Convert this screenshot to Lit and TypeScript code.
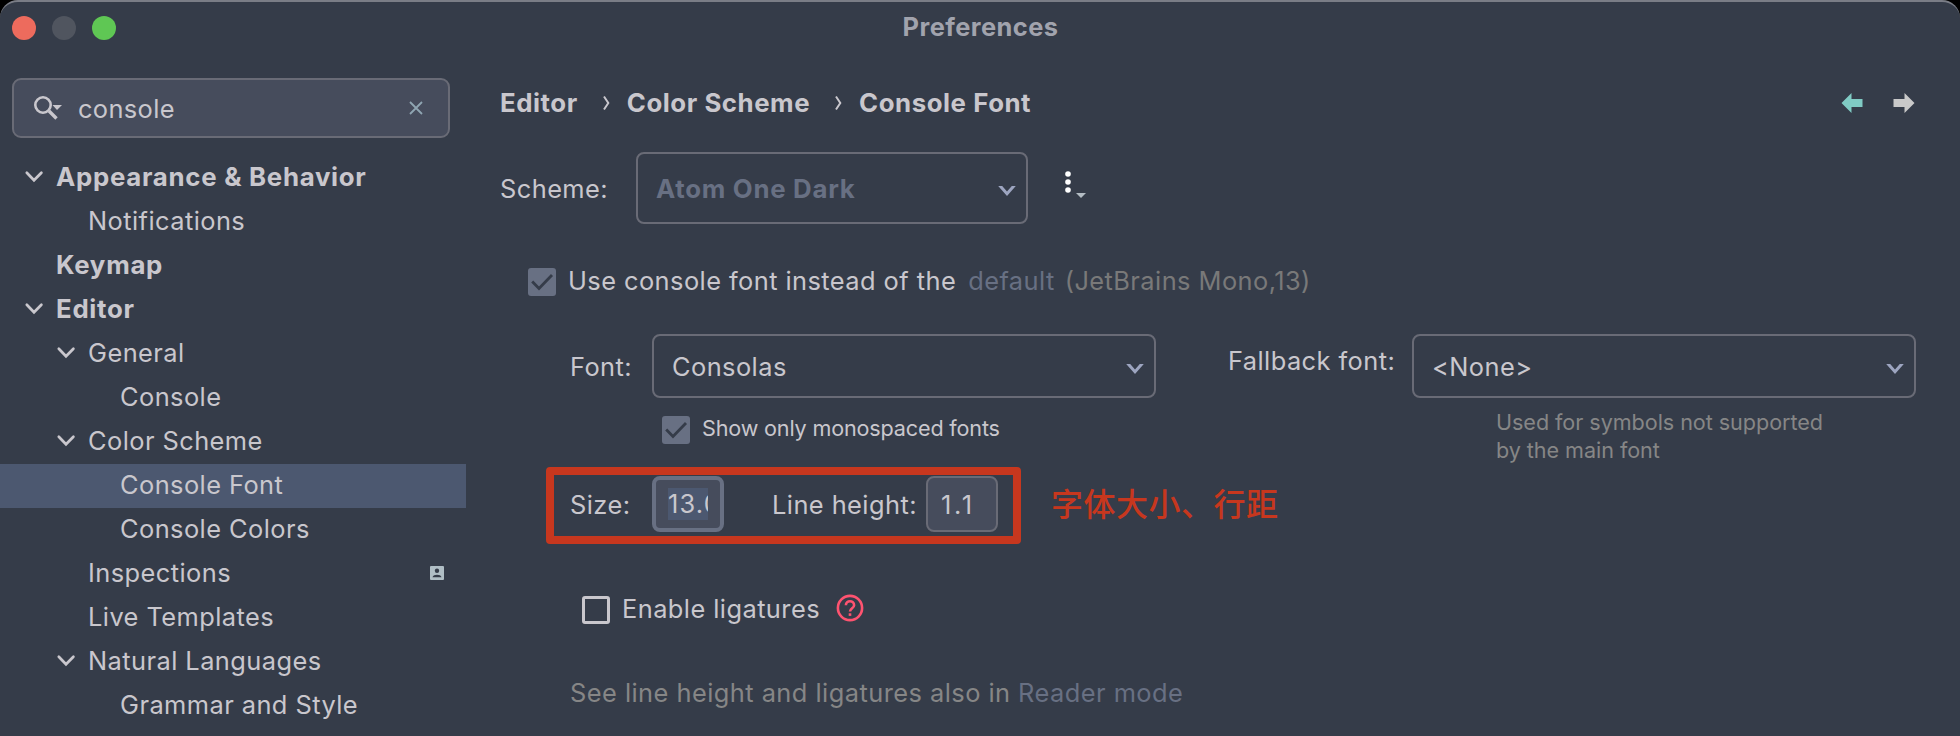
import { LitElement, html, css, svg, nothing } from "lit";
import { customElement, property } from "lit/decorators.js";
import { classMap } from "lit/directives/class-map.js";

interface TreeItem {
  label: string;
  level: number;
  bold?: boolean;
  open?: boolean;
  selected?: boolean;
  badge?: boolean;
}

const TREE: TreeItem[] = [
  { label: "Appearance & Behavior", level: 0, bold: true, open: true },
  { label: "Notifications", level: 1 },
  { label: "Keymap", level: 0, bold: true },
  { label: "Editor", level: 0, bold: true, open: true },
  { label: "General", level: 1, open: true },
  { label: "Console", level: 2 },
  { label: "Color Scheme", level: 1, open: true },
  { label: "Console Font", level: 2, selected: true },
  { label: "Console Colors", level: 2 },
  { label: "Inspections", level: 1, badge: true },
  { label: "Live Templates", level: 1 },
  { label: "Natural Languages", level: 1, open: true },
  { label: "Grammar and Style", level: 2 },
];

@customElement("settings-tree")
class SettingsTree extends LitElement {
  static styles = css`
    :host { display: block; width: 466px; }
    .row {
      display: flex; align-items: center; height: 44px; box-sizing: border-box;
      padding-right: 22px; padding-bottom: 4px; color: #c9c7cd; white-space: nowrap;
      font-size: 25.4px; letter-spacing: 0.44px;
    }
    .row.l0 { padding-left: 24px; }
    .row.l1 { padding-left: 56px; }
    .row.l2 { padding-left: 88px; }
    .row.bold { font-weight: 700; font-size: 25.8px; letter-spacing: 0.72px; }
    .row.selected { background: #4c5870; }
    .arrow { width: 32px; height: 20px; flex: none; }
    .arrow svg { display: block; }
    .label { flex: 1; }
    .badge { display: block; flex: none; margin-top: 2px; }
  `;

  render() {
    return TREE.map(
      (item) => html`
        <div class=${classMap({ row: true, ["l" + item.level]: true, bold: !!item.bold, selected: !!item.selected })}>
          <span class="arrow">
            ${item.open
              ? html`<svg width="20" height="20" viewBox="0 0 20 20"><path d="M2.8 6.7 L10 14.2 L17.4 6.7" fill="none" stroke="#c9c7cd" stroke-width="2.7" stroke-linecap="round"/></svg>`
              : nothing}
          </span>
          <span class="label">${item.label}</span>
          ${item.badge
            ? html`<svg class="badge" width="14" height="14" viewBox="0 0 14 14">
                <rect width="14" height="14" rx="1" fill="#b0bec5"/>
                <circle cx="7" cy="4.8" r="2.2" fill="#353c49"/>
                <path d="M2.5 11.2 C3 7.9 11 7.9 11.5 11.2Z" fill="#353c49"/>
              </svg>`
            : nothing}
        </div>`
    );
  }
}

@customElement("combo-box")
class ComboBox extends LitElement {
  @property() value = "";
  static styles = css`
    :host {
      display: flex; align-items: center; justify-content: space-between; box-sizing: border-box;
      border: 2px solid #696b76; border-radius: 8px; padding: 0 10px 0 18px; white-space: nowrap;
    }
    svg { display: block; margin-top: 5px; }
  `;
  render() {
    return html`<span>${this.value}</span>
      <svg width="18" height="10" viewBox="0 0 18 10"><path d="M0.2 0 H4.2 L9 5.6 L13.8 0 H17.8 L9 10Z" fill="#9da5c0"/></svg>`;
  }
}

@customElement("check-box")
class CheckBox extends LitElement {
  @property({ type: Boolean }) checked = false;
  static styles = css`
    :host { display: block; width: 28px; height: 28px; flex: none; }
    svg { display: block; }
  `;
  render() {
    return html`<svg width="28" height="28" viewBox="0 0 28 28">
      ${this.checked
        ? svg`<rect width="28" height="28" rx="3" fill="#687083"/><path d="M4.2 13.5 L11 20.5 L24 7" fill="none" stroke="#353c49" stroke-width="2.8"/>`
        : svg`<rect x="1.5" y="1.5" width="25" height="25" rx="1.5" fill="none" stroke="#c9c7cd" stroke-width="3"/>`}
    </svg>`;
  }
}

@customElement("app-root")
class AppRoot extends LitElement {
  static styles = css`
    :host { display: block; background: #000; font-family: Inter, "Noto Sans CJK SC", sans-serif; font-size: 25.4px; letter-spacing: 0.44px; color: #c9c7cd; }
    .window {
      width: 1960px; height: 736px; box-sizing: border-box; overflow: hidden; background: #353c49;
      border-top: 2px solid #7a7d86; border-radius: 18px 18px 0 0; display: flex; flex-direction: column; white-space: nowrap;
    }
    .titlebar { height: 52px; display: grid; grid-template-columns: 1fr auto 1fr; align-items: center; flex: none; }
    .lights { display: flex; gap: 16px; padding-left: 12px; }
    .light { width: 24px; height: 24px; border-radius: 50%; }
    .red { background: #ed6b5d; }
    .gray { background: #50555f; }
    .green { background: #5fc754; }
    .title { font-weight: 700; color: #a1a3ad; font-size: 25.4px; letter-spacing: 0.45px; padding: 0 0 3px 1px; }
    .body { display: flex; flex: 1; }
    .side { width: 466px; flex: none; padding-top: 24px; }
    .search {
      margin: 0 0 18px 12px; width: 438px; height: 60px; box-sizing: border-box; border: 2px solid #696b76; border-radius: 9px;
      background: #464c5c; display: flex; align-items: center; padding: 0 25px 0 20px;
    }
    .search .query { flex: 1; padding-left: 16px; padding-top: 1px; letter-spacing: 0.36px; }
    .search svg { display: block; }
    .main { padding-left: 34px; flex: 1; }
    .crumbs { display: flex; align-items: center; height: 40px; margin-top: 29px; font-weight: 700; font-size: 25.8px; letter-spacing: 0.55px; }
    .crumbs span { margin-top: -2px; }
    .crumbs .sep { display: block; margin: 0 16px 0 25px; }
    .nav { margin-left: auto; margin-right: 45px; display: flex; gap: 30px; }
    .scheme { display: flex; align-items: center; height: 72px; margin-top: 29px; }
    .scheme-label { width: 136px; }
    .scheme-combo { width: 392px; height: 72px; color: #687083; font-weight: 700; font-size: 25.8px; letter-spacing: 0.72px; }
    .more { display: block; margin-left: 34px; }
    .use { display: flex; align-items: center; height: 36px; margin: 40px 0 0 28px; }
    .use span { margin-top: -3px; }
    .use .use-label { margin-left: 12px; }
    .link { color: #687083; }
    .muted { color: #797979; }
    .use .link { margin: -3px 10px 0 12px; }
    .fonts { display: flex; height: 64px; margin: 34px 0 0 70px; align-items: center; }
    .font-label { width: 82px; }
    .wide { width: 504px; height: 64px; }
    .fallback-label { width: 184px; margin-left: 72px; margin-top: -12px; }
    .under { display: flex; margin-left: 162px; height: 69px; align-items: flex-start; }
    .under check-box { margin-top: 18px; }
    .mono { margin: 16px 0 0 12px; font-size: 21.6px; line-height: 28px; width: 794px; letter-spacing: -0.17px; }
    .hint { margin-top: 10px; font-size: 21.6px; line-height: 28px; color: #868686; letter-spacing: -0.06px; }
    .sizes { display: flex; align-items: center; margin-left: 46px; }
    .frame { box-sizing: border-box; width: 475px; height: 77px; border: 8px solid #c7371e; border-radius: 4px; display: flex; align-items: center; padding: 0 0 3px 16px; }
    .size-label { width: 82px; }
    .field { box-sizing: border-box; width: 72px; height: 56px; border-radius: 8px; border: 2px solid #696b76; background: #464c5c; display: flex; align-items: center; padding-left: 13px; letter-spacing: 2.6px; }
    .field.focus { border: 4px solid #687083; padding-left: 12px; letter-spacing: 1.2px; }
    .sel { background: #4c5870; width: 40px; height: 32px; line-height: 32px; overflow: hidden; }
    .lh-label { margin-left: 48px; width: 154px; }
    .note { margin-left: 30px; margin-top: -8px; color: #c7371e; font-family: "Noto Sans CJK SC", sans-serif; font-size: 32px; font-weight: 500; letter-spacing: 0.5px; }
    .lig { display: flex; align-items: center; height: 36px; margin: 48px 0 0 82px; }
    .lig svg { margin-top: -4px; }
    .lig-label { margin: -3px 16px 0 12px; }
    .foot { margin: 48px 0 0 70px; color: #868686; line-height: 34px; letter-spacing: 0.46px; }
  `;

  private separator() {
    return html`<svg class="sep" width="8" height="16" viewBox="0 0 8 16"><path d="M1 1.5 L5.3 8 L1 14.5" fill="none" stroke="#c9c7cd" stroke-width="2"/></svg>`;
  }

  render() {
    return html`
      <div class="window">
        <div class="titlebar">
          <div class="lights"><span class="light red"></span><span class="light gray"></span><span class="light green"></span></div>
          <div class="title">Preferences</div>
        </div>
        <div class="body">
          <div class="side">
            <div class="search">
              <svg width="28" height="24" viewBox="0 0 28 24">
                <circle cx="9" cy="9" r="7.7" fill="none" stroke="#c9c7cd" stroke-width="2.6"/>
                <path d="M15 15 L22.5 22.5" stroke="#c9c7cd" stroke-width="3.4"/>
                <path d="M18.5 9 H28 L23 14Z" fill="#c9c7cd"/>
              </svg>
              <span class="query">console</span>
              <svg width="14" height="14" viewBox="0 0 14 14"><path d="M1 1 L13 13 M13 1 L1 13" stroke="#8fa5b2" stroke-width="1.8"/></svg>
            </div>
            <settings-tree></settings-tree>
          </div>
          <div class="main">
            <div class="crumbs">
              <span>Editor</span>${this.separator()}<span>Color Scheme</span>${this.separator()}<span>Console Font</span>
              <div class="nav">
                <svg width="22" height="20" viewBox="0 0 22 20"><path d="M0.5 10 L10.5 0 V6 H21.5 V14 H10.5 V20Z" fill="#80cbc4"/></svg>
                <svg width="22" height="20" viewBox="0 0 22 20"><path d="M21.5 10 L11.5 0 V6 H0.5 V14 H11.5 V20Z" fill="#c9c9c9"/></svg>
              </div>
            </div>
            <div class="scheme">
              <span class="scheme-label">Scheme:</span>
              <combo-box class="scheme-combo" value="Atom One Dark"></combo-box>
              <svg class="more" width="26" height="34" viewBox="0 0 26 34">
                <circle cx="6" cy="3" r="2.8" fill="#fff"/><circle cx="6" cy="11" r="2.8" fill="#fff"/><circle cx="6" cy="19" r="2.8" fill="#fff"/>
                <path d="M14 22 H24 L19 27Z" fill="#b4bdc4"/>
              </svg>
            </div>
            <div class="use">
              <check-box checked></check-box>
              <span class="use-label">Use console font instead of the</span>
              <span class="link">default</span>
              <span class="muted">(JetBrains Mono,13)</span>
            </div>
            <div class="fonts">
              <span class="font-label">Font:</span>
              <combo-box class="wide" value="Consolas"></combo-box>
              <span class="fallback-label">Fallback font:</span>
              <combo-box class="wide" value="&lt;None&gt;"></combo-box>
            </div>
            <div class="under">
              <check-box checked></check-box>
              <span class="mono">Show only monospaced fonts</span>
              <div class="hint">Used for symbols not supported<br />by the main font</div>
            </div>
            <div class="sizes">
              <div class="frame">
                <span class="size-label">Size:</span>
                <div class="field focus"><div class="sel">13.0</div></div>
                <span class="lh-label">Line height:</span>
                <div class="field">1.1</div>
              </div>
              <span class="note">字体大小、行距</span>
            </div>
            <div class="lig">
              <check-box></check-box>
              <span class="lig-label">Enable ligatures</span>
              <svg width="28" height="28" viewBox="0 0 28 28">
                <circle cx="14" cy="14" r="12.1" fill="none" stroke="#ff5370" stroke-width="2.6"/>
                <path d="M9.9 11.3 C9.9 5.8 18.1 5.8 18.1 11.3 C18.1 14.2 14 14.4 14 17.6" fill="none" stroke="#ff5370" stroke-width="2.6"/>
                <rect x="12.7" y="19.3" width="2.6" height="2.6" fill="#ff5370"/>
              </svg>
            </div>
            <div class="foot">See line height and ligatures also in <span class="link">Reader mode</span></div>
          </div>
        </div>
      </div>
    `;
  }
}
